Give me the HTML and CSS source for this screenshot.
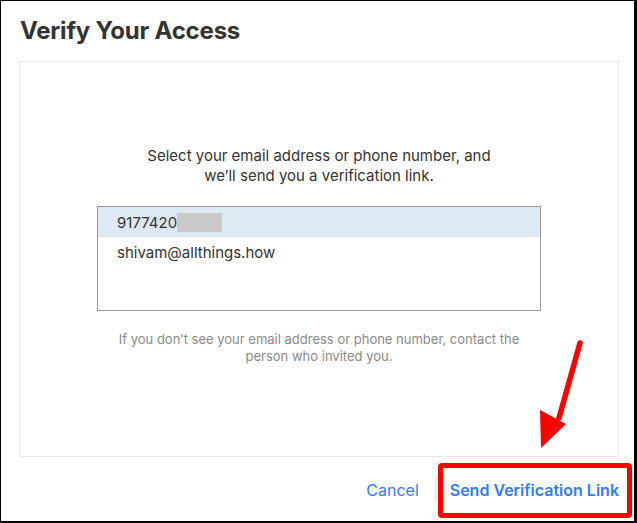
FILE: index.html
```html
<!DOCTYPE html>
<html>
<head>
<meta charset="utf-8">
<link rel="stylesheet" href="styles.css">
</head>
<body>
<div class="frame">
  <h1 class="title">Verify Your Access</h1>
  <div class="panel">
    <p class="lead">Select your email address or phone number, and<br>we’ll send you a verification link.</p>
    <div class="listbox">
      <div class="option selected">9177420<span class="redact"></span></div>
      <div class="option">shivam@allthings.how</div>
    </div>
    <p class="note">If you don’t see your email address or phone number, contact the<br>person who invited you.</p>
  </div>
  <div class="footer">
    <span class="btn cancel">Cancel</span>
    <span class="divider"></span>
    <span class="btn send">Send Verification Link</span>
  </div>
  <div class="highlight"></div>
  <svg class="arrow" width="60" height="120" viewBox="0 0 60 120">
    <line x1="45" y1="5" x2="24" y2="80" stroke="#ff0000" stroke-width="5.5" stroke-linecap="round"/>
    <polygon points="5,72 31,86 6,110" fill="#ff0000"/>
  </svg>
</div>
</body>
</html>
```

FILE: styles.css
```css
* { box-sizing: border-box; }
html, body { margin: 0; padding: 0; background: #fff; }
body { font-family: Inter, "Liberation Sans", sans-serif; color: #333; }
.frame {
  position: relative;
  width: 637px;
  height: 523px;
  border-style: solid;
  border-color: #000;
  border-width: 1px 3px 2px 1px;
  display: flex;
  flex-direction: column;
  background: #fff;
}
.title {
  margin: 0;
  padding: 15px 0 0 19px;
  height: 60px;
  font-size: 24px;
  line-height: 30px;
  font-weight: 700;
  color: #333;
  letter-spacing: -0.2px;
}
.panel {
  margin-left: 18px;
  width: 600px;
  height: 396px;
  border: 1px solid #e8e8e8;
  padding-top: 84px;
  display: flex;
  flex-direction: column;
  align-items: center;
}
.lead {
  margin: 0;
  font-size: 15px;
  line-height: 20px;
  text-align: center;
  color: #333;
}
.listbox {
  margin-top: 20px;
  width: 444px;
  height: 105px;
  border: 1px solid #9a9a9a;
}
.option {
  height: 30px;
  padding-left: 19px;
  display: flex;
  align-items: center;
  font-size: 15px;
  color: #333;
}
.option.selected { background: #dee9f5; }
.redact {
  display: inline-block;
  width: 45px;
  height: 19px;
  background: #c9c9c9;
}
.note {
  margin: 20px 0 0;
  font-size: 13px;
  line-height: 17px;
  text-align: center;
  color: #8a8a8a;
}
.footer {
  flex: 1;
  display: flex;
  align-items: center;
  justify-content: flex-end;
  padding-right: 15px;
  padding-top: 1px;
}
.btn {
  font-size: 16px;
  color: #2f7df6;
}
.send { font-weight: 600; }
.divider {
  width: 1px;
  height: 25px;
  background: #e4e4e4;
  margin: 0 14px 0 16px;
}
.highlight {
  position: absolute;
  left: 437px;
  top: 462px;
  width: 194px;
  height: 55px;
  border: 5px solid #ff0000;
  border-radius: 4px;
}
.arrow {
  position: absolute;
  left: 534px;
  top: 337px;
}
```
